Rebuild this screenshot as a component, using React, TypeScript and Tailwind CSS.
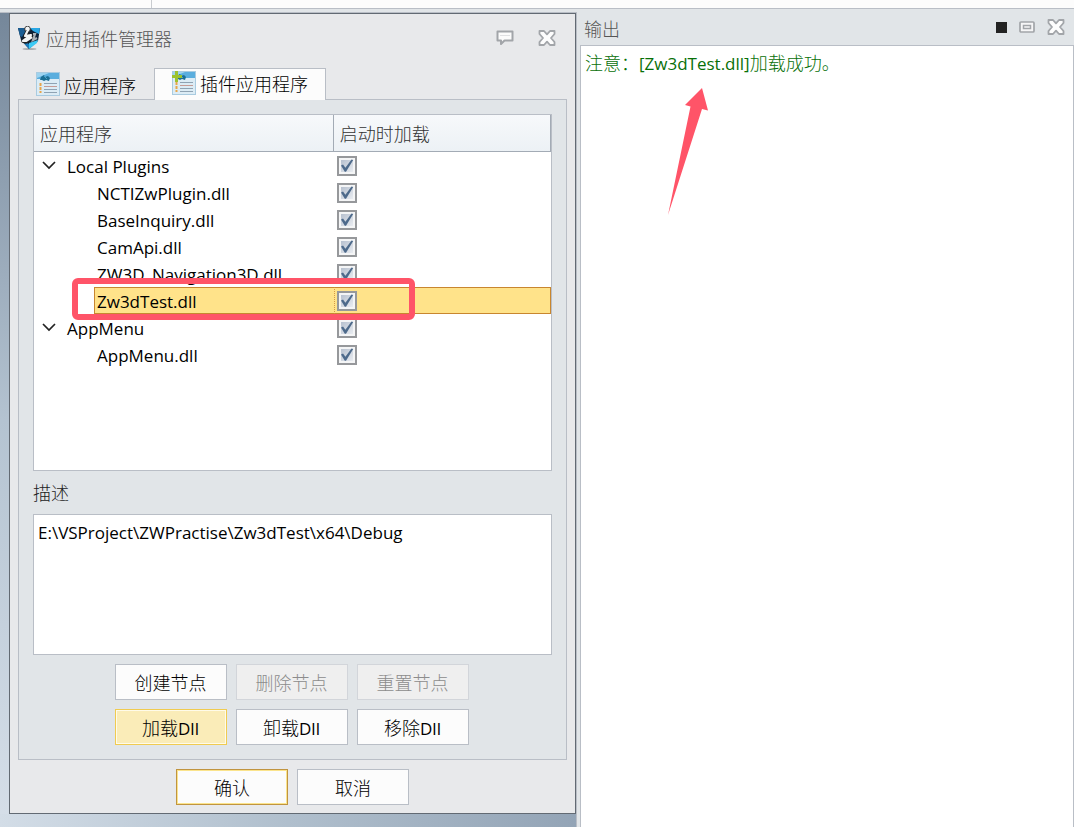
import React, { useState } from 'react'
import clsx from 'clsx'

interface PluginRow {
  name: string
  group?: boolean
}

const plugins: PluginRow[] = [
  { name: 'Local Plugins', group: true },
  { name: 'NCTIZwPlugin.dll' },
  { name: 'BaseInquiry.dll' },
  { name: 'CamApi.dll' },
  { name: 'ZW3D_Navigation3D.dll' },
  { name: 'Zw3dTest.dll' },
  { name: 'AppMenu', group: true },
  { name: 'AppMenu.dll' }
]

function AppLogo() {
  return (
    <svg className="h-6 w-6" viewBox="0 0 24 24" aria-hidden="true">
      <ellipse cx="11.5" cy="23" rx="7" ry="1" fill="#a9acaf" />
      <path d="M0 2h22l-2 13-9 8-8-9z" fill="#0c2138" />
      <path d="M0 2h6l1 4-3 5-2-1z" fill="#1a5d93" />
      <path d="M12 2h10l-1 6-6-3z" fill="#2aa7e4" />
      <path d="M3 14l8 4v5l-8-9z" fill="#1a7cbd" />
      <path d="M11 17l9-3-1 3-8 6z" fill="#3ccaf5" />
      <circle cx="9.500" cy="3" r="2.800" fill="#f2f4f5" stroke="#333" strokeWidth="0.900" />
      <path d="M10 5L7 10l6-1-8 6 3 1 7-6" fill="none" stroke="#222" strokeWidth="3.600" strokeLinejoin="round" />
      <path d="M10 4L7 10l6-1-8 6 3 0 6-4" fill="none" stroke="#f2f4f5" strokeWidth="2.200" strokeLinejoin="round" />
      <path d="M15 8h2l-2 6 4-2" fill="none" stroke="#a9b0b5" strokeWidth="2.200" />
    </svg>
  )
}

function AppIcon({ plus = false }: { plus?: boolean }) {
  return (
    <svg className="h-6 w-6 shrink-0" viewBox="0 0 24 24" aria-hidden="true">
      <rect x="0.5" y="0.5" width="23" height="23" fill="#dcecf5" stroke="#a9cbe0" />
      <path d="M1 1h22v6H1z" fill="#5aaede" />
      <path d="M1 1h12L1 6z" fill="#9dd3ef" />
      <path d="M4 8l1-3 3-2 1 2 3-1 2 2-1 3-3-1-2 1-2-1z" fill="#1b6f94" />
      <path d="M8 4l3 3" stroke="#4ba4c6" />
      {plus && <path d="M3 0h3v4h4v3H6v4H3V7H0V4h3z" fill="#9cc22e" />}
      <path d="M3.500 11h2v3h-2zM3.500 15h2v3h-2zM3.500 19h2v2h-2z" fill="#e8a54b" />
      <path d="M8 11.5h13M8 17.5h13M8 20.5h13" stroke="#8fa3b3" />
      <path d="M8 14.5h13" stroke="#c69c96" />
    </svg>
  )
}

function CloseIcon() {
  return (
    <svg className="h-4 w-[18px]" viewBox="0 0 18 16" aria-hidden="true">
      <path
        d="M1.500 1h4.500L9 4.300 12 1h4.500v3L13 8l3.500 4v3H12L9 11.700 6 15H1.500v-3L5 8 1.500 4z"
        fill="#fdfdfd"
        stroke="#a2a5a9"
        strokeWidth="1.800"
        strokeLinejoin="round"
      />
    </svg>
  )
}

function CommentIcon() {
  return (
    <svg className="h-4 w-[18px]" viewBox="0 0 18 16" aria-hidden="true">
      <path d="M1.500 1.500h15v9H8.500L5 14v-3.500H1.500z" fill="#fbfbfb" stroke="#a2a5a9" strokeWidth="2" strokeLinejoin="round" />
      <path d="M4 5.500h10" stroke="#dfe0e2" />
    </svg>
  )
}

function CheckBox({ label }: { label: string }) {
  const [checked, setChecked] = useState(true)
  return (
    <span className="relative block h-5 w-5">
      <input
        type="checkbox"
        aria-label={label}
        checked={checked}
        onChange={e => setChecked(e.target.checked)}
        className="block h-5 w-5 appearance-none border-2 border-[#96989b] bg-linear-to-br from-[#aeb9c9] to-[#f2f4f7] shadow-[inset_0_0_0_2px_#f4f5f6]"
      />
      {checked && (
        <svg className="pointer-events-none absolute inset-0" viewBox="0 0 20 20" aria-hidden="true">
          <path d="M4 9.500l2-1 2.400 3.300L14.500 3.500l1.700.4L9 15.800H7.800z" fill="#4d6a8b" />
        </svg>
      )}
    </span>
  )
}

interface DialogButtonProps {
  children: React.ReactNode
  disabled?: boolean
  variant?: 'normal' | 'active' | 'default'
}

function DialogButton({ children, disabled, variant = 'normal' }: DialogButtonProps) {
  return (
    <button
      type="button"
      disabled={disabled}
      className={clsx(
        'h-9 w-28 border pt-0.5 font-light',
        disabled && 'border-[#d2d5da] bg-[#efefef] text-[#8c8c8c]',
        !disabled && variant === 'normal' && 'border-[#b9bec6] bg-[#fcfcfc]',
        variant === 'active' && 'border-[#f0cb50] bg-[#faecb8] shadow-[inset_0_0_0_1px_#fffbe9]',
        variant === 'default' && 'border-[#c09440] bg-[#fcfcfc] shadow-[inset_0_0_0_1px_#fbe48c]'
      )}
    >
      {children}
    </button>
  )
}

const Dll = () => <span className="text-[17px] font-normal">Dll</span>

function PluginTable() {
  const [selected, setSelected] = useState('Zw3dTest.dll')
  return (
    <div className="relative h-[357px] border border-[#b9bec6] bg-white">
      <table className="w-full table-fixed border-separate border-spacing-0">
        <thead>
          <tr className="h-[37px] bg-linear-to-b from-[#f7f9fb] to-[#ecf1f5] text-left text-[#333]">
            <th className="w-[58%] border-r border-b border-[#a3abb5] px-1.5 py-0 pt-0.5 font-light">应用程序</th>
            <th className="border-r border-b border-[#a3abb5] px-1.5 py-0 pt-0.5 font-light">启动时加载</th>
          </tr>
        </thead>
        <tbody className="text-[17px]">
          {plugins.map(({ name, group }) => {
            const active = name === selected
            return (
              <tr key={name} className="h-[27px]" onClick={() => setSelected(name)}>
                <td className="p-0">
                  {group ? (
                    <div className="flex h-[27px] items-center gap-2.5 pl-2 pt-0.5">
                      <svg className="-mt-1 h-3.5 w-3.5" viewBox="0 0 14 14" aria-hidden="true">
                        <path d="M1 4l6 6 6-6" fill="none" stroke="#222" strokeWidth="1.700" />
                      </svg>
                      <span className="pl-px">{name}</span>
                    </div>
                  ) : (
                    <div
                      className={clsx(
                        'ml-[60px] flex h-[27px] items-center border border-r-0 pl-0.5 pt-0.5',
                        active ? 'border-[#c8862f] bg-[#ffe38a]' : 'border-transparent'
                      )}
                    >
                      {name}
                    </div>
                  )}
                </td>
                <td className="p-0">
                  <div
                    className={clsx(
                      'flex h-[27px] items-center border pl-0.5',
                      active ? 'border-[#c8862f] border-l-[#d59a45] bg-[#ffe38a] [border-left-style:dotted]' : 'border-transparent'
                    )}
                  >
                    <CheckBox label={name} />
                  </div>
                </td>
              </tr>
            )
          })}
        </tbody>
      </table>
      {/* callout around the freshly loaded plugin */}
      <div className="pointer-events-none absolute top-[163px] left-[38px] h-[42px] w-[343px] rounded-md border-6 border-[#ff5468]" />
    </div>
  )
}

function PluginDialog() {
  return (
    <div className="ml-[9px] border border-[#626a73] bg-[#e8e9eb] px-2">
      <div className="flex h-[54px] items-center pb-1.5 text-[#555]">
        <AppLogo />
        <h1 className="grow pl-1 pt-0.5 font-light">应用插件管理器</h1>
        <div className="flex gap-6 pr-[11px]">
          <button type="button" aria-label="反馈">
            <CommentIcon />
          </button>
          <button type="button" aria-label="关闭">
            <CloseIcon />
          </button>
        </div>
      </div>

      <div className="relative -mb-px flex items-end" role="tablist">
        <button type="button" role="tab" aria-selected={false} className="flex h-8 items-center gap-1 px-[18px] font-light">
          <AppIcon />
          <span className="pt-1">应用程序</span>
        </button>
        <button
          type="button"
          role="tab"
          aria-selected
          className="flex h-8 items-center gap-1 border border-b-0 border-[#b9bec6] bg-[#fcfcfc] px-[17px] pb-1 font-light"
        >
          <AppIcon plus />
          <span className="pt-0.5">插件应用程序</span>
        </button>
      </div>

      <div className="border border-[#b9bec6] bg-[#e1e5e8] p-3.5">
        <PluginTable />
        <label htmlFor="description" className="flex h-[43px] items-center font-light text-[#222]">
          描述
        </label>
        <textarea
          id="description"
          readOnly
          value="E:\VSProject\ZWPractise\Zw3dTest\x64\Debug"
          className="block h-[141px] w-full resize-none border border-[#b9bec6] bg-white px-1 py-1.5 text-[17px] outline-none"
        />
        <div className="mt-[9px] flex justify-center pr-0.5">
          <div className="grid grid-cols-3 gap-[9px]">
            <DialogButton>创建节点</DialogButton>
            <DialogButton disabled>删除节点</DialogButton>
            <DialogButton disabled>重置节点</DialogButton>
            <DialogButton variant="active">加载<Dll /></DialogButton>
            <DialogButton>卸载<Dll /></DialogButton>
            <DialogButton>移除<Dll /></DialogButton>
          </div>
        </div>
      </div>

      <div className="flex justify-center gap-[9px] pt-[9px] pb-2">
        <DialogButton variant="default">确认</DialogButton>
        <DialogButton>取消</DialogButton>
      </div>
    </div>
  )
}

function OutputPanel() {
  return (
    <section className="flex flex-col bg-[#e1e5e8] pl-[3px]">
      <header className="flex h-9 items-center pl-1 text-[#555]">
        <h2 className="grow pt-1 font-light">输出</h2>
        <div className="flex items-center gap-3 pr-[9px]">
          <button type="button" aria-label="停止" className="h-[11px] w-[11px] bg-[#222]" />
          <button type="button" aria-label="还原">
            <svg className="h-3 w-4" viewBox="0 0 16 12" aria-hidden="true">
              <rect x="1" y="1" width="14" height="10" rx="1" fill="#f6f6f7" stroke="#a2a5a9" strokeWidth="1.700" />
              <rect x="4.500" y="4.500" width="7" height="3" fill="#f6f6f7" stroke="#a2a5a9" strokeWidth="1.500" />
            </svg>
          </button>
          <button type="button" aria-label="关闭">
            <CloseIcon />
          </button>
        </div>
      </header>
      <div className="grow border border-b-0 border-[#b9bec6] bg-white px-1 pt-[5px] text-[#087008]">
        <p className="font-light">
          注意：<span className="text-[17px] font-normal">[Zw3dTest.dll]</span>加载成功。
        </p>
        <svg className="ml-[82px] mt-3 h-[128px] w-[42px]" viewBox="0 0 42 128" aria-hidden="true">
          <path d="M35 0L18 17l5.500 1.500L1 127 35 21l6 1.500z" fill="#ff5468" />
        </svg>
      </div>
    </section>
  )
}

export default function App() {
  return (
    <div className="flex min-h-screen flex-col bg-[#fcfcfc] font-['Open_Sans','Noto_Sans_CJK_SC',sans-serif] text-[18px] leading-6 text-black">
      <div className="flex h-2">
        <div className="w-[152px] border-r border-[#c9ccd0]" />
      </div>
      <main className="grid grow grid-cols-[577fr_497fr] border-t border-[#b9bec6] bg-[#e1e5e8]">
        <div className="flex flex-col pt-[3px]">
          <div className="grow border-t border-r border-[#b9bec6] bg-linear-to-b from-[#75879a] via-[#b4c3d1] to-[#d6dfe9]">
            <PluginDialog />
            <div className="h-[13px] bg-linear-to-r from-[#d3dde7] via-[#b0bfcd] to-[#93a4b6]" />
          </div>
        </div>
        <OutputPanel />
      </main>
    </div>
  )
}
